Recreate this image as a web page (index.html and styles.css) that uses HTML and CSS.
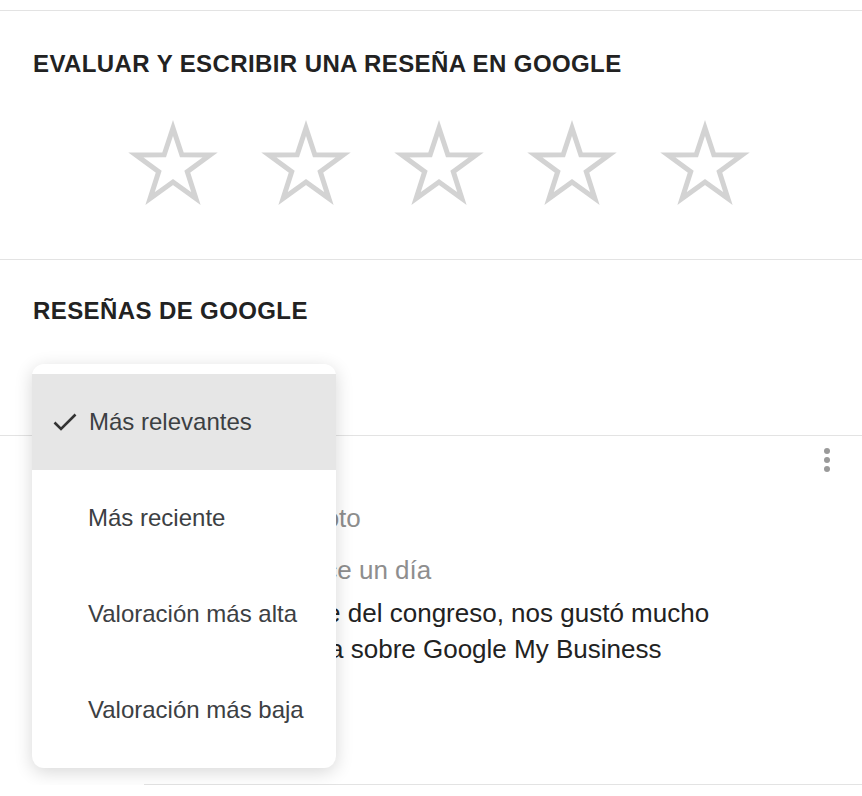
FILE: index.html
```html
<!DOCTYPE html>
<html lang="es">
<head>
    <meta charset="UTF-8">
    <meta name="viewport" content="width=device-width, initial-scale=1.0">
    <title>Reseñas de Google</title>
    <link rel="stylesheet" href="styles.css">
</head>
<body>
    <!-- Evaluar -->
    <section class="rate">
        <h2 class="section-title">EVALUAR Y ESCRIBIR UNA RESEÑA EN GOOGLE</h2>
        <div class="rate-stars">
            <svg class="big-star" viewBox="-46 -48 92 88" width="92" height="88"><polygon points="0,-39 8.82,-12.14 37.09,-12.05 14.27,4.64 22.92,31.55 0,15 -22.92,31.55 -14.27,4.64 -37.09,-12.05 -8.82,-12.14"/></svg>
            <svg class="big-star" viewBox="-46 -48 92 88" width="92" height="88"><polygon points="0,-39 8.82,-12.14 37.09,-12.05 14.27,4.64 22.92,31.55 0,15 -22.92,31.55 -14.27,4.64 -37.09,-12.05 -8.82,-12.14"/></svg>
            <svg class="big-star" viewBox="-46 -48 92 88" width="92" height="88"><polygon points="0,-39 8.82,-12.14 37.09,-12.05 14.27,4.64 22.92,31.55 0,15 -22.92,31.55 -14.27,4.64 -37.09,-12.05 -8.82,-12.14"/></svg>
            <svg class="big-star" viewBox="-46 -48 92 88" width="92" height="88"><polygon points="0,-39 8.82,-12.14 37.09,-12.05 14.27,4.64 22.92,31.55 0,15 -22.92,31.55 -14.27,4.64 -37.09,-12.05 -8.82,-12.14"/></svg>
            <svg class="big-star" viewBox="-46 -48 92 88" width="92" height="88"><polygon points="0,-39 8.82,-12.14 37.09,-12.05 14.27,4.64 22.92,31.55 0,15 -22.92,31.55 -14.27,4.64 -37.09,-12.05 -8.82,-12.14"/></svg>
        </div>
    </section>

    <!-- Reseñas -->
    <section class="reviews">
        <h2 class="section-title">RESEÑAS DE GOOGLE</h2>

        <div class="sort">
            <button class="sort-btn">Más relevantes ▾</button>

            <!-- menú de orden abierto -->
            <ul class="sort-menu">
                <li class="sort-item active">
                    <svg class="check" viewBox="0 0 24 18" width="24" height="18"><path d="M1.5 9.5 L8 16 L22.5 1.5"/></svg>
                    Más relevantes
                </li>
                <li class="sort-item">Más reciente</li>
                <li class="sort-item">Valoración más alta</li>
                <li class="sort-item">Valoración más baja</li>
            </ul>
        </div>

        <div class="review">
            <div class="review-avatar"></div>
            <div class="review-body">
                <div class="review-name">Laura Martín</div>
                <div class="review-meta">12 reseñas · 1 foto</div>
                <div class="review-rating">
                    <span class="small-stars">★★★★★</span>
                    <span>Hace un día</span>
                </div>
                <p class="review-text">El mejor ponente del congreso, nos gustó mucho su gran ponencia sobre Google My Business</p>
            </div>
            <div class="kebab"><span></span><span></span><span></span></div>
        </div>
    </section>
</body>
</html>
```

FILE: styles.css
```css
body {
    margin: 0;
    padding-top: 10px;
    font-family: 'Liberation Sans', Arial, sans-serif;
    color: #222;
    background: #fff;
}

.section-title {
    margin: 0;
    font-size: 24px;
    line-height: 28px;
    font-weight: bold;
    letter-spacing: 0.4px;
    color: #222;
}

/* Evaluar */
.rate {
    border-top: 1px solid #e3e3e3;
    padding: 39px 0 52px 33px;
}

.rate-stars {
    display: flex;
    gap: 41px;
    margin-top: 41px;
    padding-left: 94px;
}

.big-star polygon {
    fill: none;
    stroke: #d3d3d3;
    stroke-width: 5;
    stroke-linejoin: miter;
}

/* Reseñas */
.reviews {
    border-top: 1px solid #e3e3e3;
    padding-top: 37px;
}

.reviews .section-title {
    padding-left: 33px;
}

.sort {
    position: relative;
    height: 71px;
    margin-top: 39px;
    padding-left: 32px;
}

.sort-btn {
    margin-top: 20px;
    padding: 0;
    border: none;
    background: none;
    font-family: inherit;
    font-size: 22px;
    color: #3c4043;
}

.sort-menu {
    position: absolute;
    top: 0;
    left: 32px;
    z-index: 5;
    width: 304px;
    margin: 0;
    padding: 10px 0;
    list-style: none;
    background: #fff;
    border-radius: 12px;
    box-shadow: 0 4px 18px rgba(0,0,0,0.16);
}

.sort-item {
    display: flex;
    align-items: center;
    height: 96px;
    padding-left: 56px;
    font-size: 24px;
    color: #3c4043;
}

.sort-item.active {
    background: #e6e6e6;
    padding-left: 21px;
}

.check {
    margin-right: 12px;
}

.check path {
    fill: none;
    stroke: #333;
    stroke-width: 2.6;
}

.review {
    position: relative;
    display: flex;
    border-top: 1px solid #e3e3e3;
}

.review-avatar {
    width: 80px;
    height: 80px;
    margin: 20px 32px 0 32px;
    border-radius: 50%;
    background: #7b8fa6;
    flex: 0 0 80px;
}

.review-body {
    flex: 1;
    padding-bottom: 117px;
    border-bottom: 1px solid #e3e3e3;
    font-size: 26px;
    line-height: 36px;
}

.review-name {
    margin-top: 16px;
    font-weight: bold;
}

.review-meta {
    margin-top: 12px;
    color: #8e8e8e;
}

.review-rating {
    display: flex;
    margin-top: 16px;
    color: #8e8e8e;
}

.small-stars {
    width: 135px;
    margin-right: 12px;
    color: #fbbc04;
    font-family: 'DejaVu Sans', sans-serif;
    font-size: 24px;
}

.review-text {
    max-width: 580px;
    margin: 7px 0 0;
    color: #222;
}

.kebab {
    position: absolute;
    top: 12px;
    right: 32px;
    display: flex;
    flex-direction: column;
    gap: 3px;
}

.kebab span {
    width: 6px;
    height: 6px;
    border-radius: 50%;
    background: #9a9a9a;
}
```
